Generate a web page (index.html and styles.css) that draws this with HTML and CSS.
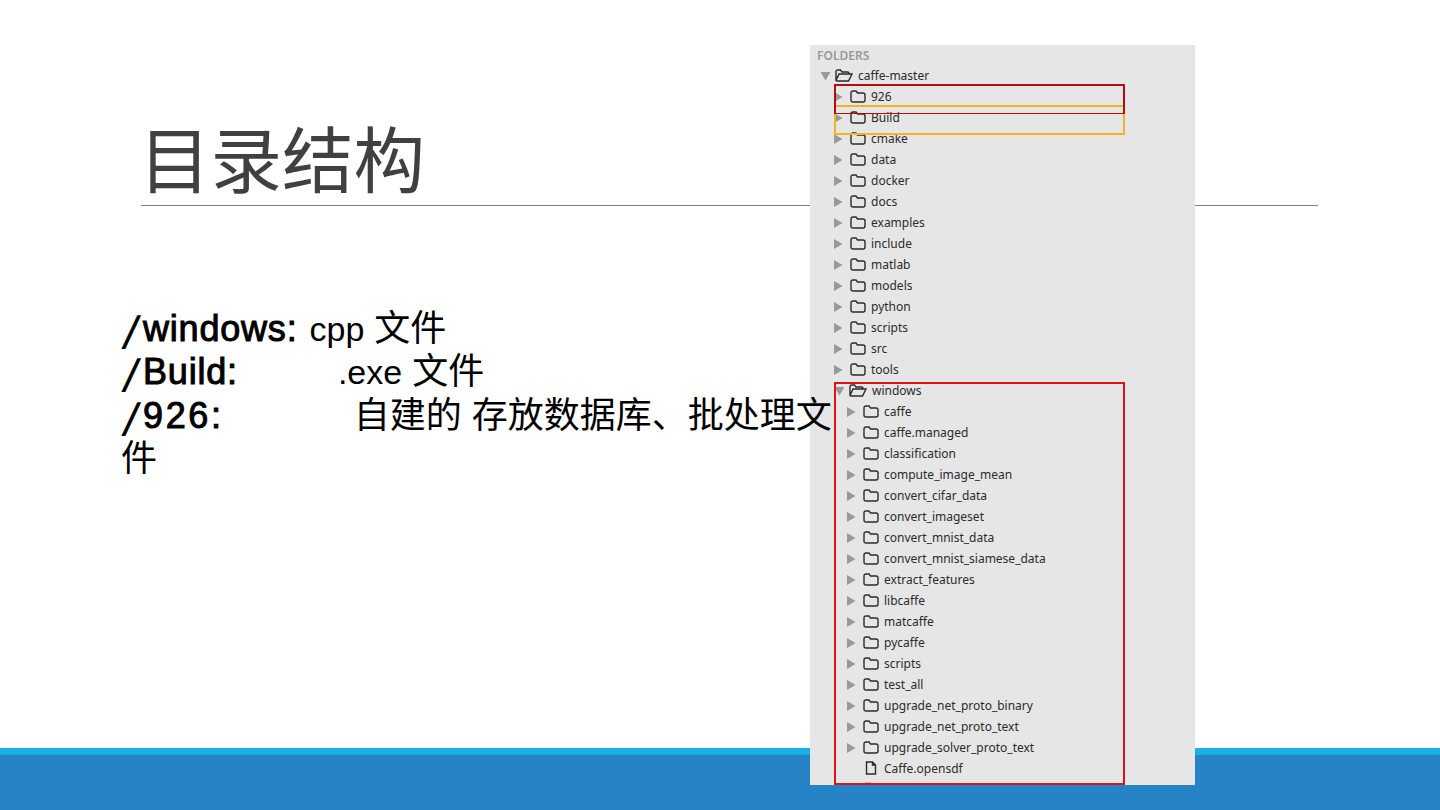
FILE: index.html
```html
<!DOCTYPE html>
<html lang="zh">
<head>
<meta charset="utf-8">
<title>目录结构</title>
<link rel="stylesheet" href="styles.css">
</head>
<body>
<svg class="defs" width="0" height="0">
  <symbol id="tri-r" viewBox="0 0 10 12"><path d="M0 0.5 L9.5 6 L0 11.5 Z"/></symbol>
  <symbol id="tri-d" viewBox="0 0 12 10"><path d="M0.5 0 L11.5 0 L6 9.5 Z"/></symbol>
  <symbol id="folder" viewBox="0 0 16 13"><path d="M1 3 Q1 1 3 1 L6 1 L7.5 3 L13 3 Q15 3 15 5 L15 10 Q15 12 13 12 L3 12 Q1 12 1 10 Z" fill="none" stroke="#2b2b2b" stroke-width="1.4"/></symbol>
  <symbol id="folder-open" viewBox="0 0 18 13"><path d="M1 11 L1 2.5 Q1 1 2.5 1 L5.5 1 L7 3 L12.5 3 Q14 3 14 4.5 L14 5 M1 11.5 L4 5 L17 5 L13.5 12 L2 12 Q1 12 1 11" fill="none" stroke="#2b2b2b" stroke-width="1.4"/></symbol>
  <symbol id="file" viewBox="0 0 12 14"><path d="M1.5 1 L7.5 1 L10.5 4 L10.5 13 L1.5 13 Z M7.5 1 L7.5 4 L10.5 4" fill="none" stroke="#2b2b2b" stroke-width="1.4"/></symbol>
</svg>
<div class="slide">
  <main class="content">
    <h1 class="title">目录结构</h1>
    <hr class="rule">
    <p class="body-text">
      <span class="key"><span class="slash">/</span>windows:</span> <span class="lat cpp">cpp</span> 文件<br>
      <span class="key"><span class="slash">/</span>Build:</span><span class="gap-exe"><span class="lat">.exe</span> 文件</span><br>
      <span class="key"><span class="slash">/</span><span class="digits">926</span>:</span><span class="gap-own">自建的 存放数据库、批处理文件</span>
    </p>
  </main>
  <footer class="footer"></footer>

  <aside class="panel">
    <div class="folders">FOLDERS</div>
    <div class="row l0"><svg class="td"><use href="#tri-d"/></svg><svg class="fo"><use href="#folder-open"/></svg><span>caffe-master</span></div>
    <div class="row l1"><svg class="tr"><use href="#tri-r"/></svg><svg class="fc"><use href="#folder"/></svg><span>926</span></div>
    <div class="row l1"><svg class="tr"><use href="#tri-r"/></svg><svg class="fc"><use href="#folder"/></svg><span>Build</span></div>
    <div class="row l1"><svg class="tr"><use href="#tri-r"/></svg><svg class="fc"><use href="#folder"/></svg><span>cmake</span></div>
    <div class="row l1"><svg class="tr"><use href="#tri-r"/></svg><svg class="fc"><use href="#folder"/></svg><span>data</span></div>
    <div class="row l1"><svg class="tr"><use href="#tri-r"/></svg><svg class="fc"><use href="#folder"/></svg><span>docker</span></div>
    <div class="row l1"><svg class="tr"><use href="#tri-r"/></svg><svg class="fc"><use href="#folder"/></svg><span>docs</span></div>
    <div class="row l1"><svg class="tr"><use href="#tri-r"/></svg><svg class="fc"><use href="#folder"/></svg><span>examples</span></div>
    <div class="row l1"><svg class="tr"><use href="#tri-r"/></svg><svg class="fc"><use href="#folder"/></svg><span>include</span></div>
    <div class="row l1"><svg class="tr"><use href="#tri-r"/></svg><svg class="fc"><use href="#folder"/></svg><span>matlab</span></div>
    <div class="row l1"><svg class="tr"><use href="#tri-r"/></svg><svg class="fc"><use href="#folder"/></svg><span>models</span></div>
    <div class="row l1"><svg class="tr"><use href="#tri-r"/></svg><svg class="fc"><use href="#folder"/></svg><span>python</span></div>
    <div class="row l1"><svg class="tr"><use href="#tri-r"/></svg><svg class="fc"><use href="#folder"/></svg><span>scripts</span></div>
    <div class="row l1"><svg class="tr"><use href="#tri-r"/></svg><svg class="fc"><use href="#folder"/></svg><span>src</span></div>
    <div class="row l1"><svg class="tr"><use href="#tri-r"/></svg><svg class="fc"><use href="#folder"/></svg><span>tools</span></div>
    <div class="row l1"><svg class="td"><use href="#tri-d"/></svg><svg class="fo"><use href="#folder-open"/></svg><span>windows</span></div>
    <div class="row l2"><svg class="tr"><use href="#tri-r"/></svg><svg class="fc"><use href="#folder"/></svg><span>caffe</span></div>
    <div class="row l2"><svg class="tr"><use href="#tri-r"/></svg><svg class="fc"><use href="#folder"/></svg><span>caffe.managed</span></div>
    <div class="row l2"><svg class="tr"><use href="#tri-r"/></svg><svg class="fc"><use href="#folder"/></svg><span>classification</span></div>
    <div class="row l2"><svg class="tr"><use href="#tri-r"/></svg><svg class="fc"><use href="#folder"/></svg><span>compute_image_mean</span></div>
    <div class="row l2"><svg class="tr"><use href="#tri-r"/></svg><svg class="fc"><use href="#folder"/></svg><span>convert_cifar_data</span></div>
    <div class="row l2"><svg class="tr"><use href="#tri-r"/></svg><svg class="fc"><use href="#folder"/></svg><span>convert_imageset</span></div>
    <div class="row l2"><svg class="tr"><use href="#tri-r"/></svg><svg class="fc"><use href="#folder"/></svg><span>convert_mnist_data</span></div>
    <div class="row l2"><svg class="tr"><use href="#tri-r"/></svg><svg class="fc"><use href="#folder"/></svg><span>convert_mnist_siamese_data</span></div>
    <div class="row l2"><svg class="tr"><use href="#tri-r"/></svg><svg class="fc"><use href="#folder"/></svg><span>extract_features</span></div>
    <div class="row l2"><svg class="tr"><use href="#tri-r"/></svg><svg class="fc"><use href="#folder"/></svg><span>libcaffe</span></div>
    <div class="row l2"><svg class="tr"><use href="#tri-r"/></svg><svg class="fc"><use href="#folder"/></svg><span>matcaffe</span></div>
    <div class="row l2"><svg class="tr"><use href="#tri-r"/></svg><svg class="fc"><use href="#folder"/></svg><span>pycaffe</span></div>
    <div class="row l2"><svg class="tr"><use href="#tri-r"/></svg><svg class="fc"><use href="#folder"/></svg><span>scripts</span></div>
    <div class="row l2"><svg class="tr"><use href="#tri-r"/></svg><svg class="fc"><use href="#folder"/></svg><span>test_all</span></div>
    <div class="row l2"><svg class="tr"><use href="#tri-r"/></svg><svg class="fc"><use href="#folder"/></svg><span>upgrade_net_proto_binary</span></div>
    <div class="row l2"><svg class="tr"><use href="#tri-r"/></svg><svg class="fc"><use href="#folder"/></svg><span>upgrade_net_proto_text</span></div>
    <div class="row l2"><svg class="tr"><use href="#tri-r"/></svg><svg class="fc"><use href="#folder"/></svg><span>upgrade_solver_proto_text</span></div>
    <div class="row l2"><i class="tr"></i><svg class="fl"><use href="#file"/></svg><span>Caffe.opensdf</span></div>
  </aside>

  <div class="mark mark-orange"></div>
  <div class="mark mark-dark"></div>
  <div class="mark mark-red"></div>
</div>
</body>
</html>
```
FILE: styles.css
```css
html, body { margin: 0; padding: 0; background: #fff; }
.defs { position: absolute; }
.slide {
  position: relative;
  width: 1440px;
  height: 810px;
  overflow: hidden;
  display: flex;
  flex-direction: column;
  font-family: "Liberation Sans", "Noto Sans CJK SC", sans-serif;
}
.content { flex: 1; padding: 113px 122px 0 121px; }
.title {
  margin: 0 0 0 18px;
  font: 400 71.5px/86px "Noto Sans CJK SC", sans-serif;
  color: #404040;
}
.rule {
  margin: 6px 0 0 20px;
  border: 0;
  height: 1px;
  background: #808080;
}
.body-text {
  position: relative;
  z-index: 1;
  margin: 100.6px 0 0;
  width: 715px;
  font-size: 36px;
  line-height: 43.5px;
  color: #000;
}
.key {
  -webkit-text-stroke: 1px #000;
  letter-spacing: 0.8px;
}
.lat { font-size: 34px; line-height: 0; }
.cpp { margin-left: 2px; }
.slash {
  display: inline-block;
  line-height: 1;
  margin: 0 7px 0 5px;
  letter-spacing: 0;
  transform: translateY(4px) skewX(-14deg) scaleY(1.23);
}
.digits { letter-spacing: 2.6px; }
.gap-exe { margin-left: 100px; }
.gap-own { margin-left: 132px; }

.footer {
  height: 55px;
  background: #2683c6;
  border-top: 7px solid #1cade4;
}

.panel {
  position: absolute;
  left: 810px;
  top: 45px;
  width: 385px;
  height: 740px;
  overflow: hidden;
  background: #e6e6e6;
  font-family: "Noto Sans", sans-serif;
  font-size: 12px;
  color: #2b2b2b;
}
.folders {
  height: 16.5px;
  padding: 3px 0 0 7px;
  line-height: 16px;
  font-weight: 600;
  color: #999;
}
.row {
  display: flex;
  align-items: center;
  height: 21px;
  white-space: nowrap;
}
.l0 { padding-left: 10px; }
.l1 { padding-left: 24px; }
.l2 { padding-left: 37px; }
.tr { width: 9px; height: 12px; margin: 2px 7px 0 0; fill: #999; display: block; flex: none; }
.td { width: 11px; height: 9px; margin: 2px 4px 0 0; fill: #999; flex: none; }
.fc { width: 16px; height: 13px; margin-right: 5px; flex: none; }
.fo { width: 18px; height: 13px; margin-right: 5px; flex: none; }
.fl { width: 12px; height: 14px; margin: 0 7px 0 2px; flex: none; }

.mark {
  position: absolute;
  left: 834px;
  width: 291px;
  box-sizing: border-box;
  border-style: solid;
}
.mark-orange { top: 105px; height: 30px; border-width: 2px; border-color: #f2b423; }
.mark-dark { top: 84px; height: 30px; border-width: 2px 2px 1px; border-color: #b50d0d; }
.mark-red { top: 382px; height: 403px; border-width: 2px; border-color: #dd1414; }
.mark-red::after {
  content: "";
  position: absolute;
  left: 29px;
  bottom: 0;
  width: 6px;
  height: 1px;
  background: #e8a0a0;
}
```
